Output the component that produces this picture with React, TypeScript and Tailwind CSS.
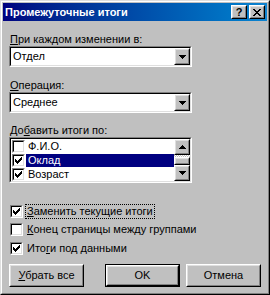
import React from 'react';

const Raised = ({ className = '', children }: { className?: string; children?: React.ReactNode }) => (
    <div className={`border border-t-white border-l-white border-r-black border-b-black ${className}`}>
        <div className="w-full h-full border border-t-[#dfdfdf] border-l-[#dfdfdf] border-r-[#808080] border-b-[#808080] bg-[#c0c0c0] flex items-center justify-center">
            {children}
        </div>
    </div>
);

const Sunken = ({ className = '', children }: { className?: string; children?: React.ReactNode }) => (
    <div className={`border border-t-[#808080] border-l-[#808080] border-r-white border-b-white ${className}`}>
        <div className="w-full h-full border border-t-black border-l-black border-r-[#dfdfdf] border-b-[#dfdfdf] bg-white relative overflow-hidden">
            {children}
        </div>
    </div>
);

const CheckMark = () => (
    <svg width="7" height="7" viewBox="0 0 7 7" shapeRendering="crispEdges" className="block">
        <path d="M6 0h1v1h-1zM5 1h2v1h-2zM0 2h1v1h-1zM4 2h3v1h-3zM0 3h2v1h-2zM3 3h3v1h-3zM0 4h5v1h-5zM1 5h3v1h-3zM2 6h1v1h-1z" fill="#000" />
    </svg>
);

const CheckBox = ({ checked }: { checked?: boolean }) => (
    <Sunken className="w-[13px] h-[13px] shrink-0">
        <div className="w-full h-full flex items-center justify-center">{checked && <CheckMark />}</div>
    </Sunken>
);

const ArrowDown = () => (
    <svg width="7" height="4" viewBox="0 0 7 4" shapeRendering="crispEdges" className="block">
        <path d="M0 0h7v1h-7zM1 1h5v1h-5zM2 2h3v1h-3zM3 3h1v1h-1z" fill="#000" />
    </svg>
);

const ArrowUp = () => (
    <svg width="7" height="4" viewBox="0 0 7 4" shapeRendering="crispEdges" className="block">
        <path d="M3 0h1v1h-1zM2 1h3v1h-3zM1 2h5v1h-5zM0 3h7v1h-7z" fill="#000" />
    </svg>
);

const Combo = ({ value }: { value: string }) => (
    <Sunken className="w-[183px] h-[21px]">
        <div className="flex h-full items-center">
            <span className="pl-[2px] flex-1">{value}</span>
            <Raised className="w-[16px] h-[17px]">
                <ArrowDown />
            </Raised>
        </div>
    </Sunken>
);

const listItems = [
    { name: 'Ф.И.О.', checked: false, selected: false },
    { name: 'Оклад', checked: true, selected: true },
    { name: 'Возраст', checked: true, selected: false },
];

export default function App() {
    return (
        <div className="w-[270px] h-[295px] bg-[#c0c0c0] font-['Liberation_Sans',Arial,sans-serif] text-[11px] leading-[13px] text-black">
            <div className="h-full border border-t-[#dfdfdf] border-l-[#dfdfdf] border-r-black border-b-black">
                <div className="h-full border border-t-white border-l-white border-r-[#808080] border-b-[#808080] p-px flex flex-col">
                    <div className="h-[18px] flex items-center pl-[2px] pr-[2px] bg-linear-to-r from-[#000080] to-[#1084d0]">
                        <span className="flex-1 font-bold text-white">Промежуточные итоги</span>
                        <Raised className="w-[16px] h-[14px]">
                            <span className="font-bold text-[11px] leading-none">?</span>
                        </Raised>
                        <Raised className="w-[16px] h-[14px] ml-[2px]">
                            <svg width="8" height="7" viewBox="0 0 8 7" shapeRendering="crispEdges" className="block">
                                <path d="M0 0h2v1h-2zM6 0h2v1h-2zM1 1h2v1h-2zM5 1h2v1h-2zM2 2h4v1h-4zM3 3h2v1h-2zM2 4h4v1h-4zM1 5h2v1h-2zM5 5h2v1h-2zM0 6h2v1h-2zM6 6h2v1h-2z" fill="#000" />
                            </svg>
                        </Raised>
                    </div>

                    <div className="flex flex-col px-[6px]">
                        <div className="mt-[12px] pl-px"><u>П</u>ри каждом изменении в:</div>
                        <Combo value="Отдел" />

                        <div className="mt-[12px] pl-px"><u>О</u>перация:</div>
                        <Combo value="Среднее" />

                        <div className="mt-[11px] pl-px">До<u>б</u>авить итоги по:</div>
                        <Sunken className="w-[183px] h-[46px]">
                            <div className="flex h-full">
                                <div className="flex-1 flex flex-col">
                                    {listItems.map(item => (
                                        <div key={item.name} className="h-[14px] flex items-center pl-px shrink-0">
                                            <CheckBox checked={item.checked} />
                                            <span className={`ml-px h-[13px] flex-1 pl-[2px] ${item.selected ? 'bg-[#000080] text-white' : ''}`}>
                                                {item.name}
                                            </span>
                                        </div>
                                    ))}
                                </div>
                                <div className="w-[16px] flex flex-col">
                                    <Raised className="w-[16px] h-[16px]">
                                        <ArrowUp />
                                    </Raised>
                                    <div className="h-[2px] bg-[repeating-conic-gradient(#fff_0_25%,#c0c0c0_0_50%)] bg-[length:2px_2px]" />
                                    <Raised className="w-[16px] h-[8px]" />
                                    <Raised className="w-[16px] h-[16px]">
                                        <ArrowDown />
                                    </Raised>
                                </div>
                            </div>
                        </Sunken>

                        <div className="mt-[21px] h-[15px] flex items-center pl-px">
                            <CheckBox checked />
                            <span className="ml-[2px] px-px border border-dotted border-black leading-[13px]"><u>З</u>аменить текущие итоги</span>
                        </div>
                        <div className="mt-[3px] h-[15px] flex items-center pl-px">
                            <CheckBox />
                            <span className="ml-[4px]"><u>К</u>онец страницы между группами</span>
                        </div>
                        <div className="mt-[4px] h-[15px] flex items-center pl-px">
                            <CheckBox checked />
                            <span className="ml-[4px]">Ито<u>г</u>и под данными</span>
                        </div>

                        <div className="mt-[8px] flex">
                            <Raised className="w-[75px] h-[23px]">
                                <span><u>У</u>брать все</span>
                            </Raised>
                            <div className="ml-[21px] w-[75px] h-[23px] border border-black">
                                <Raised className="w-full h-full">
                                    <span>OK</span>
                                </Raised>
                            </div>
                            <Raised className="ml-[6px] w-[75px] h-[23px]">
                                <span>Отмена</span>
                            </Raised>
                        </div>
                    </div>
                </div>
            </div>
        </div>
    );
}
